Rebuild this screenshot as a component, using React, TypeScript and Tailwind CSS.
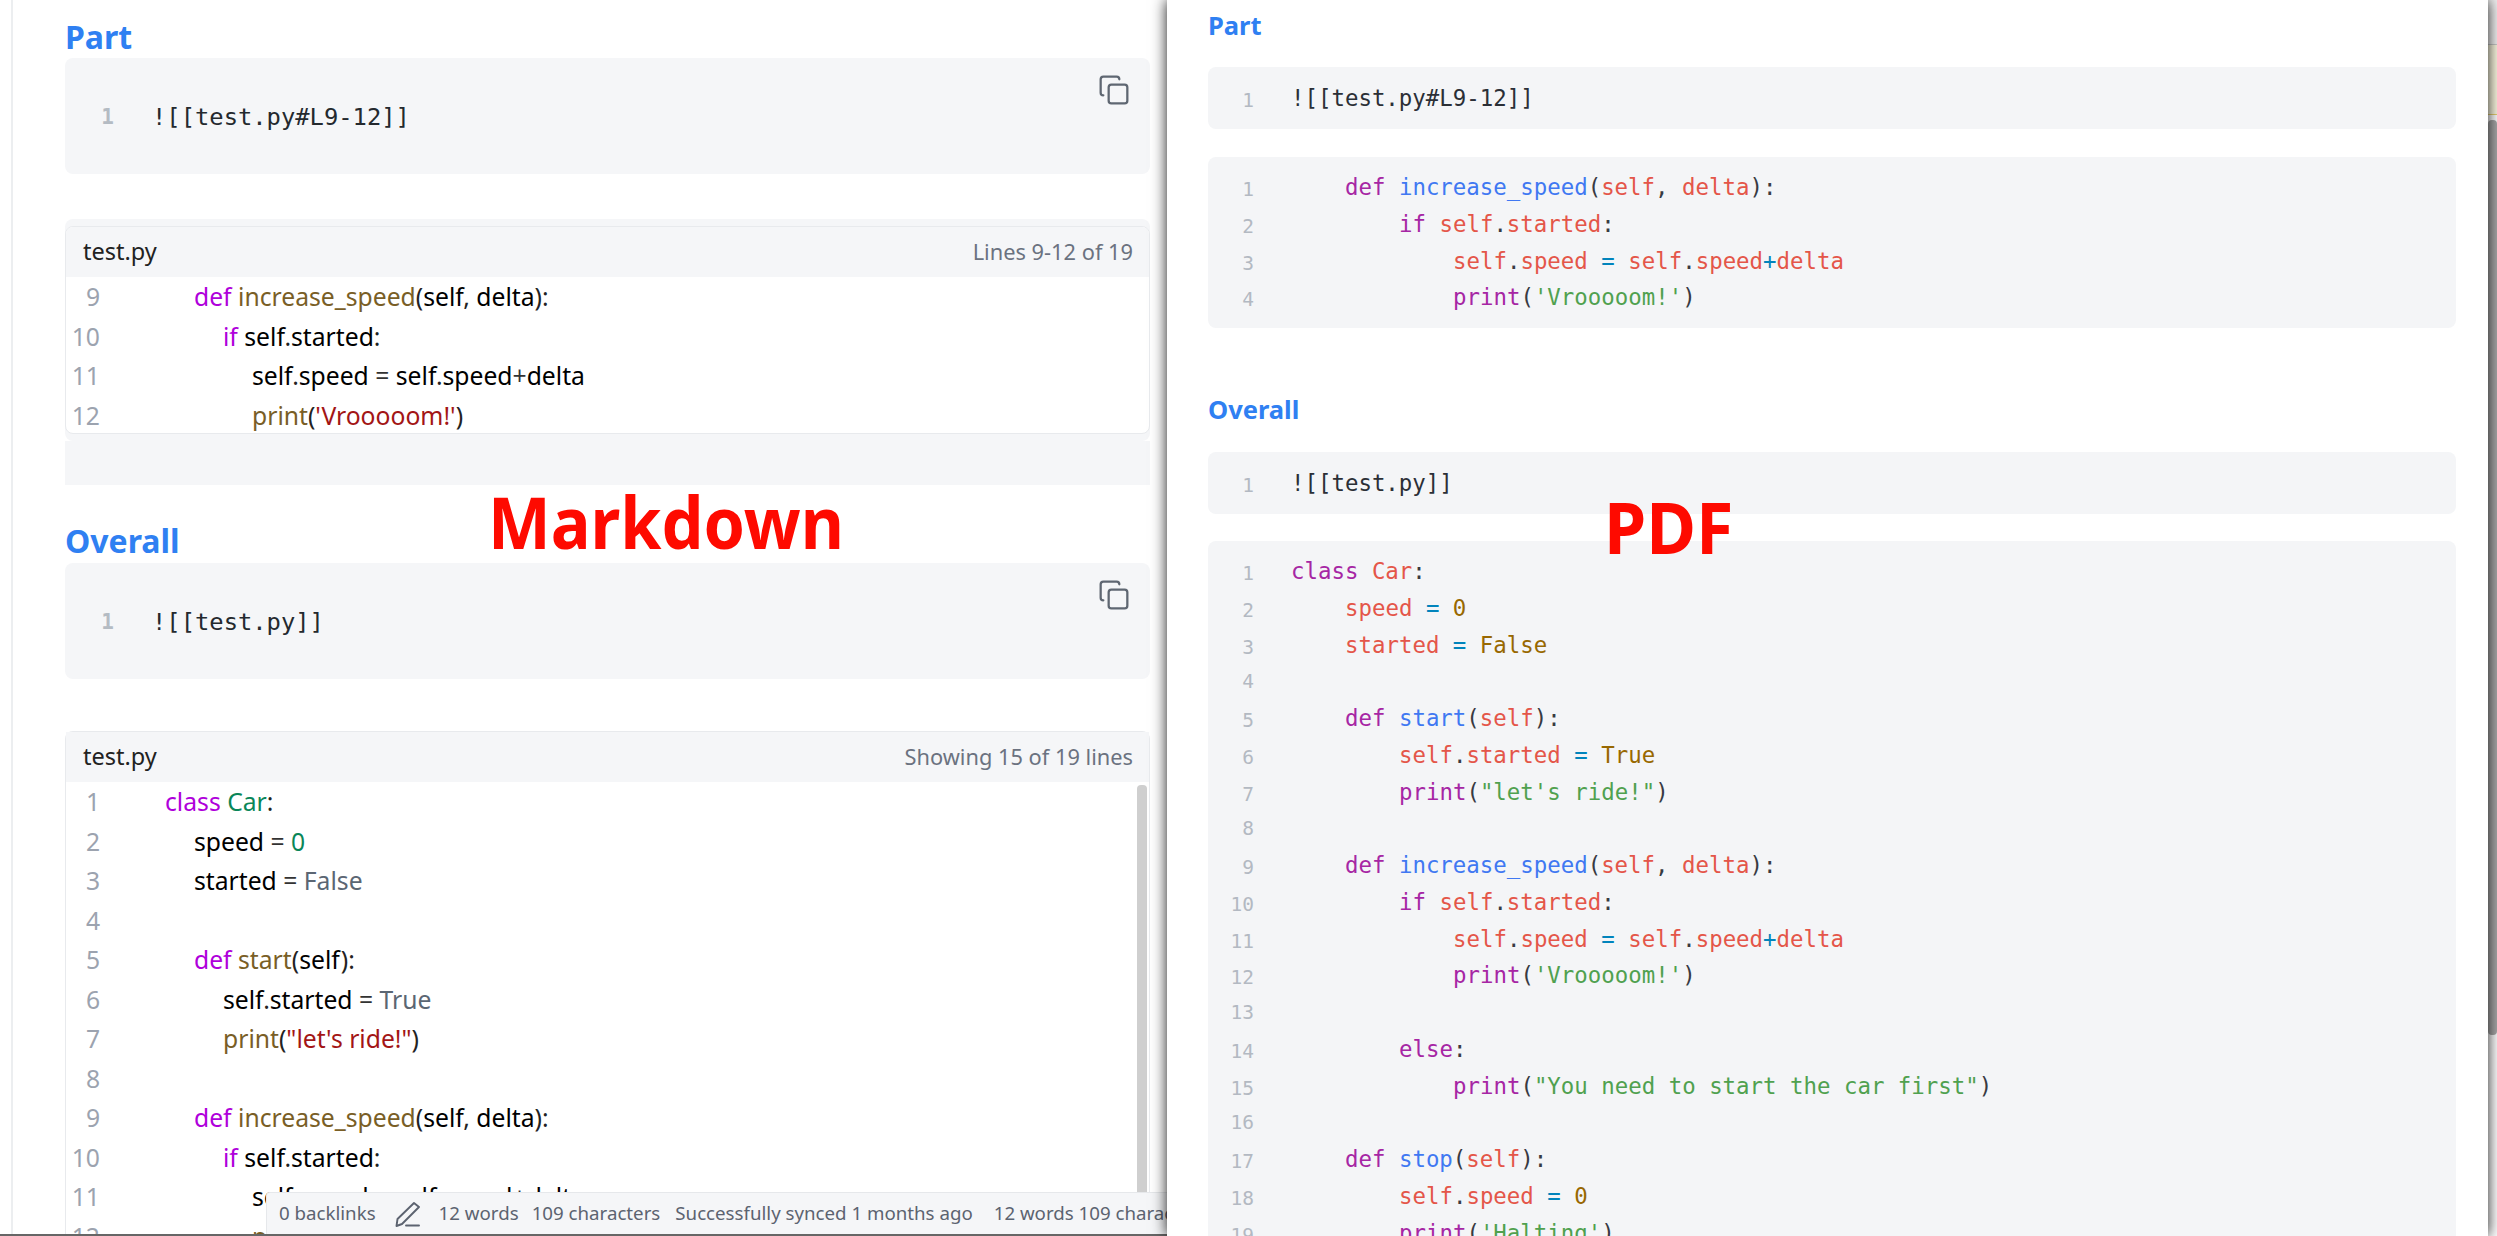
import React from "react";

type Tok = [string, string];
type Line = { i: number; t: Tok[] };

const L = (i: number, ...t: Tok[]): Line => ({ i, t });

const increase: Line[] = [
  L(1, ["k", "def "], ["f", "increase_speed"], ["n", "("], ["v", "self"], ["n", ", "], ["v", "delta"], ["n", "):"]),
  L(2, ["k", "if "], ["v", "self"], ["n", "."], ["v", "started"], ["n", ":"]),
  L(3, ["v", "self"], ["n", "."], ["v", "speed"], ["o", " = "], ["v", "self"], ["n", "."], ["v", "speed"], ["o", "+"], ["v", "delta"]),
  L(3, ["p", "print"], ["n", "("], ["s", "'Vrooooom!'"], ["n", ")"]),
];

const full: Line[] = [
  L(0, ["k", "class "], ["c", "Car"], ["n", ":"]),
  L(1, ["v", "speed"], ["o", " = "], ["d", "0"]),
  L(1, ["v", "started"], ["o", " = "], ["a", "False"]),
  L(0),
  L(1, ["k", "def "], ["f", "start"], ["n", "("], ["v", "self"], ["n", "):"]),
  L(2, ["v", "self"], ["n", "."], ["v", "started"], ["o", " = "], ["a", "True"]),
  L(2, ["p", "print"], ["n", "("], ["s", "\"let's ride!\""], ["n", ")"]),
  L(0),
  ...increase,
  L(0),
  L(2, ["k", "else"], ["n", ":"]),
  L(3, ["p", "print"], ["n", "("], ["s", "\"You need to start the car first\""], ["n", ")"]),
  L(0),
  L(1, ["k", "def "], ["f", "stop"], ["n", "("], ["v", "self"], ["n", "):"]),
  L(2, ["v", "self"], ["n", "."], ["v", "speed"], ["o", " = "], ["d", "0"]),
  L(2, ["p", "print"], ["n", "("], ["s", "'Halting'"], ["n", ")"]),
];

const leftColors: Record<string, string> = {
  k: "text-[#af00db]",
  f: "text-[#795e26]",
  p: "text-[#795e26]",
  c: "text-[#098658]",
  v: "text-black",
  n: "text-[#222222]",
  o: "text-[#333333]",
  s: "text-[#a31515]",
  a: "text-[#5b6673]",
  d: "text-[#098658]",
};
const rightColors: Record<string, string> = {
  k: "text-[#a626a4]",
  f: "text-[#4078f2]",
  p: "text-[#a626a4]",
  c: "text-[#e45649]",
  v: "text-[#e45649]",
  n: "text-[#383a42]",
  o: "text-[#0184bc]",
  s: "text-[#50a14f]",
  a: "text-[#986801]",
  d: "text-[#986801]",
};
const leftIndent = ["pl-0", "pl-[29px]", "pl-[58px]", "pl-[87px]"];
const rightIndent = ["pl-0", "pl-[54px]", "pl-[108px]", "pl-[162px]"];

function CopyIcon() {
  return (
    <svg
      className="absolute right-[20px] top-[16px] text-[#5f6772]"
      width="32"
      height="32"
      viewBox="0 0 24 24"
      fill="none"
      stroke="currentColor"
      strokeWidth="1.7"
      strokeLinecap="round"
      strokeLinejoin="round"
    >
      <rect x="8" y="8" width="14" height="14" rx="2" />
      <path d="M4 16c-1.1 0-2-.9-2-2V4c0-1.1.9-2 2-2h10c1.1 0 2 .9 2 2" />
    </svg>
  );
}

function PencilIcon() {
  return (
    <svg width="26" height="26" viewBox="0 0 26 26" fill="none" stroke="#5c6370" strokeWidth="1.9" strokeLinejoin="round" strokeLinecap="round" className="shrink-0">
      <path d="M19 2 L24 6 L7 23 L1.5 25 L2.5 18 Z" />
      <path d="M11 24.5 H24" />
    </svg>
  );
}

function LeftSource({ text }: { text: string }) {
  return (
    <div className="relative flex h-[116px] items-center rounded-lg bg-[#f5f6f8]">
      <CopyIcon />
      <span className="w-[49px] pt-[3px] text-right font-['DejaVu_Sans_Mono',monospace] text-[21px] font-bold text-[#b4bbc3]">1</span>
      <span className="ml-[38px] pt-[3px] font-['DejaVu_Sans_Mono',monospace] text-[23.8px] text-[#24292e]">{text}</span>
    </div>
  );
}

function LeftRows({ lines, start }: { lines: Line[]; start: number }) {
  return (
    <>
      {lines.map((l, n) => (
        <div key={n} className="flex h-[39.5px] items-center text-[24.7px] leading-[39.5px] whitespace-pre">
          <span className="w-[34px] text-right text-[#9ca3af]">{n + start}</span>
          <span className={`ml-[65px] ${leftIndent[l.i]}`}>
            {l.t.map((t, k) => (
              <span key={k} className={leftColors[t[0]]}>
                {t[1]}
              </span>
            ))}
          </span>
        </div>
      ))}
    </>
  );
}

function CardHeader({ right }: { right: string }) {
  return (
    <div className="flex h-[50px] shrink-0 items-center justify-between bg-[#f5f6f8] pl-[17px] pr-[16px]">
      <span className="text-[23.5px] text-[#222222]">test.py</span>
      <span className="text-[21.8px] text-[#6b7280]">{right}</span>
    </div>
  );
}

function RightRows({ lines, start }: { lines: Line[]; start: number }) {
  return (
    <>
      {lines.map((l, n) => (
        <div key={n} className="flex h-[36.75px] items-baseline leading-[36.75px] whitespace-pre font-['DejaVu_Sans_Mono',monospace]">
          <span className="w-[46px] translate-y-px text-right text-[19.5px] text-[#b3b9c2]">{n + start}</span>
          <span className={`ml-[37px] text-[22.4px] ${rightIndent[l.i]}`}>
            {l.t.map((t, k) => (
              <span key={k} className={rightColors[t[0]]}>
                {t[1]}
              </span>
            ))}
          </span>
        </div>
      ))}
    </>
  );
}

function RightSource({ text }: { text: string }) {
  return (
    <div className="rounded-lg bg-[#f4f5f7] py-[12.5px]">
      <div className="flex h-[37px] items-baseline leading-[37px] font-['DejaVu_Sans_Mono',monospace]">
        <span className="w-[46px] translate-y-px text-right text-[19.5px] text-[#b3b9c2]">1</span>
        <span className="ml-[37px] text-[22.4px] text-[#2b2f36]">{text}</span>
      </div>
    </div>
  );
}

export default function App() {
  return (
    <div className="relative flex h-[1236px] w-[2497px] overflow-hidden bg-white font-['Noto_Sans',sans-serif]">
      {/* left pane: markdown */}
      <div className="relative flex h-full w-[1167px] shrink-0 flex-col">
        <div className="min-h-0 flex-1 overflow-hidden pl-[11px]">
          <div className="h-full border-l-2 border-[#eceef0] pl-[52px] pr-[17px] pt-[17px]">
            <h2 className="mb-px h-[40px] text-[32px] font-bold leading-[40px] text-[#2f80f2]">Part</h2>
            <LeftSource text="![[test.py#L9-12]]" />

            <div className="mt-[45px] rounded-lg bg-[#f5f6f8] py-[7px]">
              <div className="flex h-[208px] flex-col overflow-hidden rounded-lg border border-[#e8eaed] bg-white">
                <CardHeader right="Lines 9-12 of 19" />
                <div>
                  <LeftRows lines={increase} start={9} />
                </div>
              </div>
            </div>
            <div className="h-[44px] bg-[#f5f6f8]" />

            <h2 className="mt-[36px] mb-[2px] h-[40px] text-[32px] font-bold leading-[40px] text-[#2f80f2]">Overall</h2>
            <LeftSource text="![[test.py]]" />

            <div className="mt-[52px] flex flex-col rounded-t-lg border-x border-t border-[#e8eaed] bg-white">
              <CardHeader right="Showing 15 of 19 lines" />
              <div className="flex">
                <div className="min-w-0 flex-1">
                  <LeftRows lines={full.slice(0, 15)} start={1} />
                </div>
                <div className="mt-[3px] mr-[2px] h-[500px] w-[10px] shrink-0 rounded-t-sm bg-[#cfcfcf]" />
              </div>
            </div>
          </div>
        </div>
        <div className="h-[2px] shrink-0 bg-[#666666]" />

        {/* status bar floats over the note */}
        <div className="absolute bottom-[2px] left-[266px] right-0 flex h-[42px] items-center overflow-hidden whitespace-nowrap rounded-tl border-l border-t border-[#e6e8eb] bg-[#f5f6f8] pl-[12px] text-[18.7px] text-[#5c6370]">
          <span>0 backlinks</span>
          <span className="ml-[19px]">
            <PencilIcon />
          </span>
          <span className="ml-[18px]">12 words</span>
          <span className="ml-[13px]">109 characters</span>
          <span className="ml-[15px]">Successfully synced 1 months ago</span>
          <span className="ml-[21px]">12 words 109 characters</span>
        </div>

        <div className="absolute left-[488px] top-[476px] scale-y-[1.08] text-[66.5px] font-bold leading-[90px] text-[#fe0a00]">Markdown</div>
      </div>

      {/* right pane: pdf */}
      <div className="relative z-10 h-full w-[1321px] shrink-0 overflow-hidden bg-white pl-[41px] pr-[32px] pt-[8px] shadow-[0_0_14px_rgba(0,0,0,0.9)]">
        <h2 className="mb-[25px] h-[34px] text-[25.5px] font-bold leading-[34px] text-[#2f80f2]">Part</h2>
        <RightSource text="![[test.py#L9-12]]" />
        <div className="mt-[28px] rounded-lg bg-[#f4f5f7] py-3">
          <RightRows lines={increase} start={1} />
        </div>
        <h2 className="mt-[64px] mb-[26px] h-[34px] text-[25.5px] font-bold leading-[34px] text-[#2f80f2]">Overall</h2>
        <RightSource text="![[test.py]]" />
        <div className="mt-[27px] rounded-t-lg bg-[#f4f5f7] py-3">
          <RightRows lines={full} start={1} />
        </div>
        <div className="absolute left-[437px] top-[481px] scale-y-[1.06] text-[68px] font-bold leading-[90px] text-[#fe0a00]">PDF</div>
      </div>

      {/* window edge beyond the pane */}
      <div className="flex h-full w-[9px] shrink-0 flex-col bg-white">
        <div className="h-[44px] shrink-0 bg-[#f1f1f1]" />
        <div className="h-[71px] shrink-0 border-y border-t-[#c9c9c9] border-b-[#e8cf70] bg-[#fbf8e0]" />
        <div className="mt-[5px] h-[915px] shrink-0 rounded-sm bg-[#a8a8a8]" />
      </div>
    </div>
  );
}
